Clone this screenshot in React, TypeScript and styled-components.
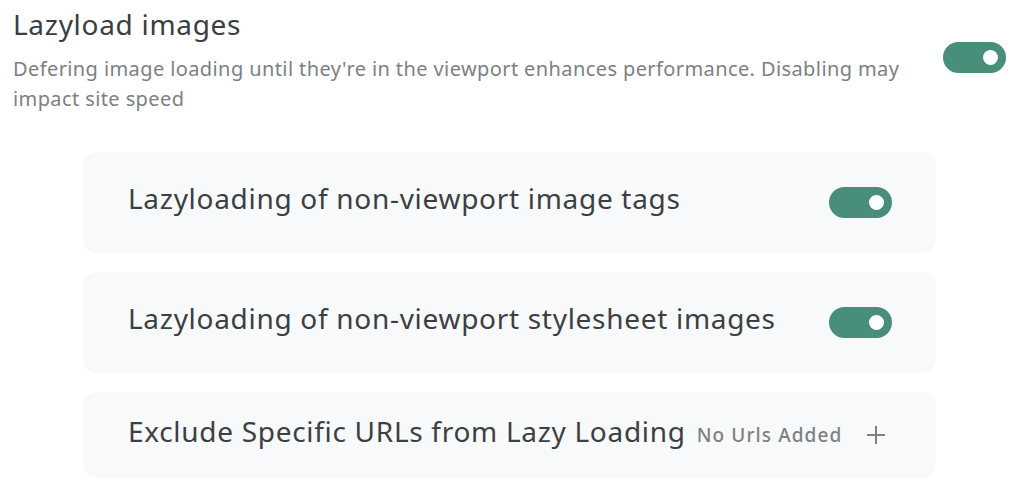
import React, { useState } from "react";
import styled, { createGlobalStyle } from "styled-components";

const GlobalStyle = createGlobalStyle`
  body {
    margin: 0;
    background: #fff;
    font-family: "Noto Sans", "Open Sans", "Liberation Sans", sans-serif;
  }
`;

const Page = styled.div`
  padding: 4px 18px 0 13px;
`;

const Header = styled.div`
  display: flex;
  align-items: flex-start;
  justify-content: space-between;
  gap: 40px;
`;

const HeaderText = styled.div`
  flex: 1;
`;

const Title = styled.h2`
  margin: 0;
  font-size: 28px;
  font-weight: 400;
  letter-spacing: 0.7px;
  line-height: 40px;
  color: #3a3d42;
`;

const Description = styled.p`
  margin: 10px 0 0;
  font-size: 20px;
  letter-spacing: 0.4px;
  line-height: 30px;
  color: #7d7f83;
  max-width: 900px;
`;

const Options = styled.div`
  display: flex;
  flex-direction: column;
  gap: 19px;
  margin: 38px 70px 0 70px;
`;

const Card = styled.div<{ $compact?: boolean }>`
  display: flex;
  align-items: center;
  justify-content: space-between;
  height: ${(p) => (p.$compact ? 86 : 101)}px;
  padding: 0 44px 0 45px;
  background: #f8f9fb;
  border-radius: 14px;
  box-sizing: border-box;
`;

const CardLabel = styled.span`
  font-size: 28px;
  letter-spacing: 0.7px;
  color: #3c3f44;
  display: flex;
  align-items: baseline;
  gap: 11px;
  padding-bottom: 9px;
`;

const Muted = styled.span`
  font-size: 19px;
  font-weight: 500;
  letter-spacing: 1.1px;
  color: #7e8084;
`;

const Track = styled.button<{ $on: boolean }>`
  position: relative;
  width: 63px;
  height: 31px;
  border: none;
  padding: 0;
  border-radius: 16px;
  background: ${(p) => (p.$on ? "#488e7b" : "#c9ccd1")};
  cursor: pointer;
  flex-shrink: 0;

  &::after {
    content: "";
    position: absolute;
    top: 8px;
    left: ${(p) => (p.$on ? "40px" : "8px")};
    width: 15px;
    height: 15px;
    border-radius: 50%;
    background: #fff;
  }
`;

const AddButton = styled.button`
  border: none;
  background: none;
  padding: 0;
  margin-right: 5px;
  color: #7e8084;
  display: flex;
  cursor: pointer;
`;

const Toggle = ({ initial = true }: { initial?: boolean }) => {
  const [on, setOn] = useState(initial);
  return <Track $on={on} onClick={() => setOn(!on)} aria-pressed={on} />;
};

export default function App() {
  return (
    <>
      <GlobalStyle />
      <Page>
        <Header>
          <HeaderText>
            <Title>Lazyload images</Title>
            <Description>
              Defering image loading until they're in the viewport enhances
              performance. Disabling may impact site speed
            </Description>
          </HeaderText>
          <div style={{ marginTop: 38 }}>
            <Toggle />
          </div>
        </Header>
        <Options>
          <Card>
            <CardLabel>Lazyloading of non-viewport image tags</CardLabel>
            <Toggle />
          </Card>
          <Card>
            <CardLabel>Lazyloading of non-viewport stylesheet images</CardLabel>
            <Toggle />
          </Card>
          <Card $compact>
            <CardLabel>
              Exclude Specific URLs from Lazy Loading
              <Muted>No Urls Added</Muted>
            </CardLabel>
            <AddButton aria-label="Add URL">
              <svg width="22" height="22" viewBox="0 0 22 22" fill="none" stroke="currentColor" strokeWidth="2">
                <path d="M11 2v18M2 11h18" />
              </svg>
            </AddButton>
          </Card>
        </Options>
      </Page>
    </>
  );
}
